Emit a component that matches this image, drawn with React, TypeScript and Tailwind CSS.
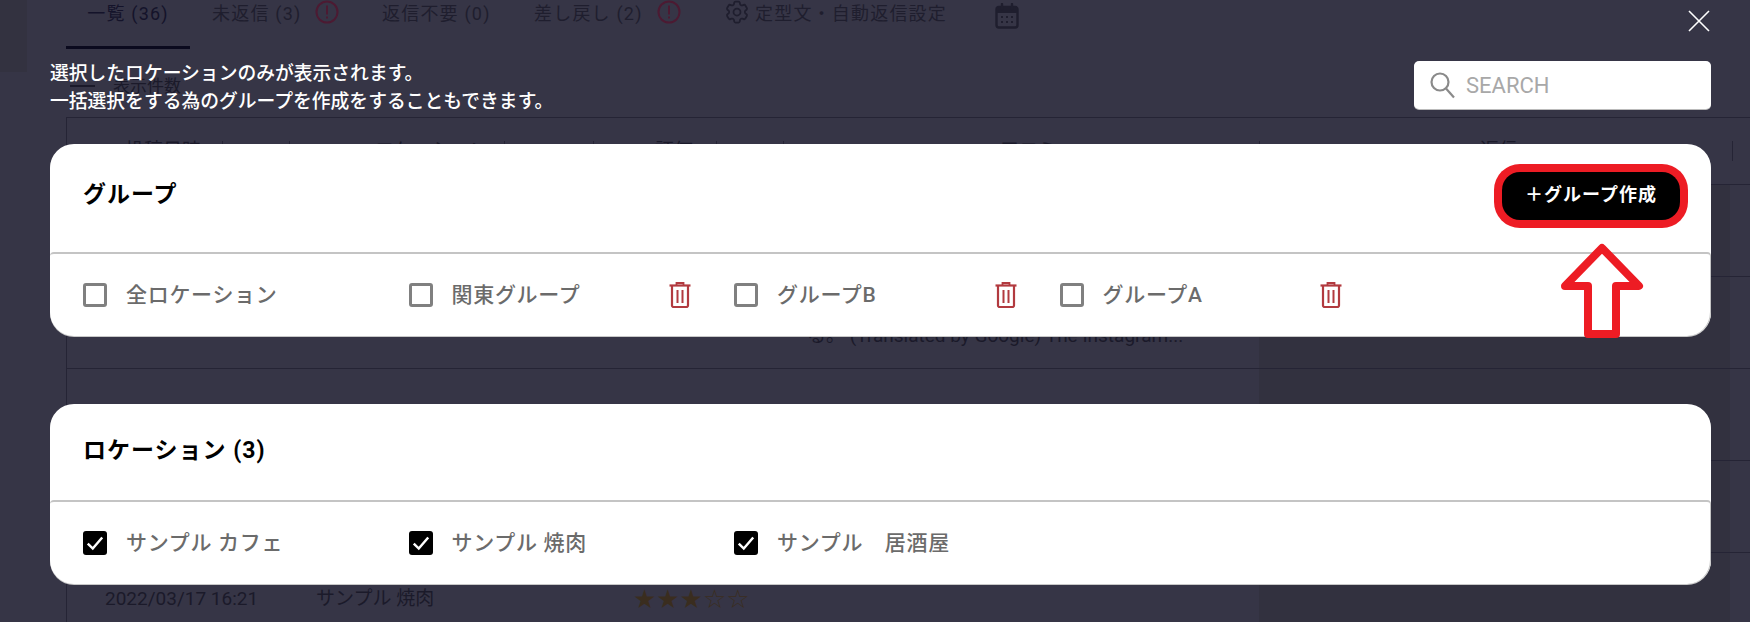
import React from "react";

const FONT = "font-['Roboto','Noto_Sans_CJK_JP',sans-serif]";

const AlertIcon = () => (
  <svg width="24" height="24" viewBox="0 0 24 24" fill="none" stroke="#4c1a32" strokeWidth="2" className="shrink-0 -mt-[1px]">
    <circle cx="12" cy="12" r="10.5" />
    <path d="M12 5.5v9M12 16.5v2" />
  </svg>
);

const Gear = () => (
  <svg width="28" height="28" viewBox="0 0 24 24" fill="none" stroke="#1f1e2e" strokeWidth="1.5" strokeLinecap="round" strokeLinejoin="round" className="shrink-0 -mt-[3px]">
    <path d="M9.594 3.94c.09-.542.56-.94 1.11-.94h2.593c.55 0 1.02.398 1.11.94l.213 1.281c.063.374.313.686.645.87.074.04.147.083.22.127.325.196.72.257 1.075.124l1.217-.456a1.125 1.125 0 0 1 1.37.49l1.296 2.247a1.125 1.125 0 0 1-.26 1.431l-1.003.827c-.293.241-.438.613-.43.992a7.723 7.723 0 0 1 0 .255c-.008.378.137.75.43.991l1.004.827c.424.35.534.955.26 1.43l-1.298 2.247a1.125 1.125 0 0 1-1.369.491l-1.217-.456c-.355-.133-.75-.072-1.076.124a6.47 6.47 0 0 1-.22.128c-.331.183-.581.495-.644.869l-.213 1.281c-.09.543-.56.94-1.11.94h-2.594c-.55 0-1.019-.398-1.11-.94l-.213-1.281c-.062-.374-.312-.686-.644-.87a6.52 6.52 0 0 1-.22-.127c-.325-.196-.72-.257-1.076-.124l-1.217.456a1.125 1.125 0 0 1-1.369-.49l-1.297-2.247a1.125 1.125 0 0 1 .26-1.431l1.004-.827c.292-.24.437-.613.43-.991a6.932 6.932 0 0 1 0-.255c.007-.38-.138-.751-.43-.992l-1.004-.827a1.125 1.125 0 0 1-.26-1.43l1.297-2.247a1.125 1.125 0 0 1 1.37-.491l1.216.456c.356.133.751.072 1.076-.124.072-.044.146-.086.22-.128.332-.183.582-.495.644-.869l.214-1.28Z" />
    <circle cx="12" cy="12" r="3" />
  </svg>
);

const Calendar = () => (
  <svg width="24" height="26" viewBox="0 0 24 26" fill="none" className="shrink-0 mt-[2px]">
    <rect x="1.5" y="4" width="21" height="20.5" rx="2.5" stroke="#1f1e2e" strokeWidth="2.4" />
    <path d="M1.5 6.5a2.5 2.5 0 0 1 2.5-2.5h16a2.5 2.5 0 0 1 2.5 2.5V10h-21z" fill="#1f1e2e" />
    <path d="M7 1v5M17 1v5" stroke="#1f1e2e" strokeWidth="2.4" strokeLinecap="round" />
    <path d="M6 14h2M11 14h2M16 14h2M6 19h2M11 19h2M16 19h2" stroke="#1f1e2e" strokeWidth="2" />
  </svg>
);

const Trash = () => (
  <svg width="22" height="26" viewBox="0 0 22 26" fill="none" className="shrink-0">
    <path d="M0.5 3.5h21" stroke="#b23a3f" strokeWidth="2.2" />
    <path d="M7.5 3V1h7v2" stroke="#b23a3f" strokeWidth="1.8" />
    <path d="M3 4v19.5A1.5 1.5 0 0 0 4.5 25h13a1.5 1.5 0 0 0 1.5-1.5V4" stroke="#b23a3f" strokeWidth="2.2" />
    <path d="M8.5 8v13M13.5 8v13" stroke="#b23a3f" strokeWidth="2" />
  </svg>
);

const Unchecked = () => (
  <span className="block w-[24px] h-[24px] shrink-0 rounded-[3px] border-[3px] border-[#808080]" />
);

const Checked = () => (
  <span className="flex items-center justify-center w-[24px] h-[24px] shrink-0 rounded-[3px] bg-black">
    <svg width="20" height="20" viewBox="0 0 18 18" fill="none" stroke="#fff" strokeWidth="2.2">
      <path d="M2.5 9.5l4.5 4.5 8.5-10" />
    </svg>
  </span>
);

const headCells = [
  { w: "w-[156px]", pl: "pl-[58px]", t: "投稿日時" },
  { w: "w-[67px]", pl: "", t: "" },
  { w: "w-[215px]", pl: "pl-[85px]", t: "ロケーション" },
  { w: "w-[89px]", pl: "", t: "" },
  { w: "w-[123px]", pl: "pl-[61px]", t: "評価" },
  { w: "w-[67px]", pl: "", t: "" },
  { w: "w-[476px]", pl: "pl-[216px]", t: "口コミ" },
  { w: "w-[473px]", pl: "pl-[220px]", t: "返信" },
];

const Row = ({ date, loc, stars, comment, lifted }: { date?: string; loc?: string; stars?: string; comment?: React.ReactNode; lifted?: boolean }) => (
  <div className={`h-[92px] shrink-0 border-b border-[#252435] grid grid-cols-[249px_317px_174px_452px_471px] items-center text-[19px] leading-[26px] text-[#1b1a2a] ${lifted ? "pb-[6px]" : ""}`}>
    <div className="pl-[38px] whitespace-nowrap">{date}</div>
    <div className="whitespace-nowrap">{loc}</div>
    <div className="text-[#3a2d1f] text-[26px] leading-[26px] font-['DejaVu_Sans'] whitespace-nowrap">{stars}</div>
    <div className="whitespace-nowrap">{comment}</div>
    <div className="h-[91px] bg-[#32313f]" />
  </div>
);

const Background = () => (
  <div className="flex h-[622px] bg-[#363546]">
    <div className="w-[27px] shrink-0">
      <div className="h-[72px] bg-[#333240]" />
    </div>
    <div className="flex-1 flex flex-col min-w-0">
      <div className="h-[49px] shrink-0 flex items-start pl-[39px] pt-0 text-[18px] leading-[26px] tracking-[1.2px] text-[#1f1e2e]">
        <div className="w-[124px] h-[49px] shrink-0 pt-[1px] text-center border-b-[3px] border-[#0b0a1e] text-[#14132a]">一覧 (36)</div>
        <div className="w-[22px] shrink-0" />
        <div className="flex pt-[1px]">
          <span className="w-[103px]">未返信 (3)</span>
          <AlertIcon />
          <span className="w-[43px]" />
          <span className="w-[152px]">返信不要 (0)</span>
          <span className="w-[123px]">差し戻し (2)</span>
          <AlertIcon />
          <span className="w-[42px]" />
          <Gear />
          <span className="w-[4px]" />
          <span className="w-[240px]">定型文・自動返信設定</span>
          <Calendar />
        </div>
      </div>
      <div className="h-[68px] shrink-0 pl-[43px] pt-[25px] flex items-start gap-[18px] text-[17px] leading-[24px] text-[#1b1a2a]">
        <span className="block w-[25px] h-[2px] mt-[11px] bg-[#1b1a2a]" />
        <span>表示件数</span>
      </div>
      <div className="ml-[39px] shrink-0 border-l border-t border-[#252435] flex flex-col">
        <div className="h-[67px] shrink-0 border-b border-[#252435] flex items-start text-[19px] leading-[20px] text-[#1b1a2a] pt-[23px]">
          {headCells.map((c, i) => (
            <div key={i} className={`${c.w} ${c.pl} h-[20px] shrink-0 border-r border-[#252435]`}>{c.t}</div>
          ))}
        </div>
        <Row />
        <Row comment={<>サンプルの口コミです。とても良いお店でした。<br />る。 (Translated by Google) The Instagram...</>} />
        <Row loc="サンプル カフェ" stars="★★★★☆" comment={<span className="block pl-[34px]">とても美味しかったです。また利用したいと</span>} />
        <Row />
        <Row lifted date="2022/03/17 16:21" loc="サンプル 焼肉" stars="★★★☆☆" />
      </div>
    </div>
  </div>
);

const Card = ({ title, action, tall, children }: { title: string; action?: React.ReactNode; tall?: boolean; children: React.ReactNode }) => (
  <section className="shrink-0 rounded-[24px] bg-white shadow-[0_1px_0_#c8c8c8]">
    <div className={`flex justify-between items-start pl-[33px] pr-[31px] pt-[28px] ${tall ? "h-[108px]" : "h-[96px]"}`}>
      <h2 className={`text-[23px] leading-[34px] font-bold tracking-[1px] text-black ${tall ? "mt-[6px]" : "mt-[2px]"}`}>{title}</h2>
      {action}
    </div>
    <div className="h-[84px] rounded-t-[4px] rounded-b-[24px] border-t-2 border-r border-[#c4c4c4] flex items-center pl-[33px] text-[21px] leading-[28px] tracking-[0.7px] font-medium text-[#6b6b6b]">
      {children}
    </div>
  </section>
);

const Item = ({ label, checked, trash }: { label: string; checked?: boolean; trash?: boolean }) => (
  <div className="w-[325.5px] shrink-0 flex items-center">
    {checked ? <Checked /> : <Unchecked />}
    <span className="ml-[19px] flex-1 whitespace-pre">{label}</span>
    {trash && <span className="mr-[43px]"><Trash /></span>}
  </div>
);

export default function App() {
  return (
    <div className={`relative w-[1750px] h-[622px] overflow-hidden ${FONT}`}>
      <Background />

      <div className="absolute inset-0 pl-[50px] pr-[39px] pt-[61px] flex flex-col">
        <button className="absolute right-[39px] top-[9px] w-[24px] h-[24px]" aria-label="close">
          <svg width="24" height="24" viewBox="0 0 24 24" fill="none" stroke="#fff" strokeWidth="1.6">
            <path d="M2 2l20 20M22 2L2 22" />
          </svg>
        </button>

        <div className="flex justify-between h-[83px] shrink-0">
          <p className="text-[18.8px] leading-[28px] -mt-[1px] font-medium text-white">
            選択したロケーションのみが表示されます。<br />
            一括選択をする為のグループを作成をすることもできます。
          </p>
          <div className="w-[297px] h-[48px] rounded-[5px] bg-white shadow-[0_1px_0_#bbb] flex items-center pl-[15px] gap-[10px]">
            <svg width="27" height="28" viewBox="0 0 27 28" fill="none" stroke="#8a8a8a" strokeWidth="2.2" className="shrink-0">
              <circle cx="11" cy="11" r="8.5" />
              <path d="M17 17.5l8 9" />
            </svg>
            <span className="text-[22px] text-[#a8a8a8]">SEARCH</span>
          </div>
        </div>

        <Card
          tall
          title="グループ"
          action={
            <button className="w-[178px] h-[48px] pb-[4px] rounded-[18px] bg-black text-white text-[18px] font-bold tracking-[1px] shadow-[0_0_0_8px_#ed1c24]">
              ＋グループ作成
            </button>
          }
        >
          <Item label="全ロケーション" />
          <Item label="関東グループ" trash />
          <Item label="グループB" trash />
          <Item label="グループA" trash />
        </Card>

        <div className="h-[68px] shrink-0" />

        <Card title="ロケーション (3)">
          <Item label="サンプル カフェ" checked />
          <Item label="サンプル 焼肉" checked />
          <Item label="サンプル　居酒屋" checked />
        </Card>
      </div>

      <svg className="absolute left-[1555px] top-[236px]" width="95" height="106" viewBox="1555 236 95 106" fill="#fff" stroke="#ed1c24" strokeWidth="8" strokeLinejoin="round">
        <path d="M1602 248L1639 286H1616V334H1588V286H1565Z" />
      </svg>
    </div>
  );
}
